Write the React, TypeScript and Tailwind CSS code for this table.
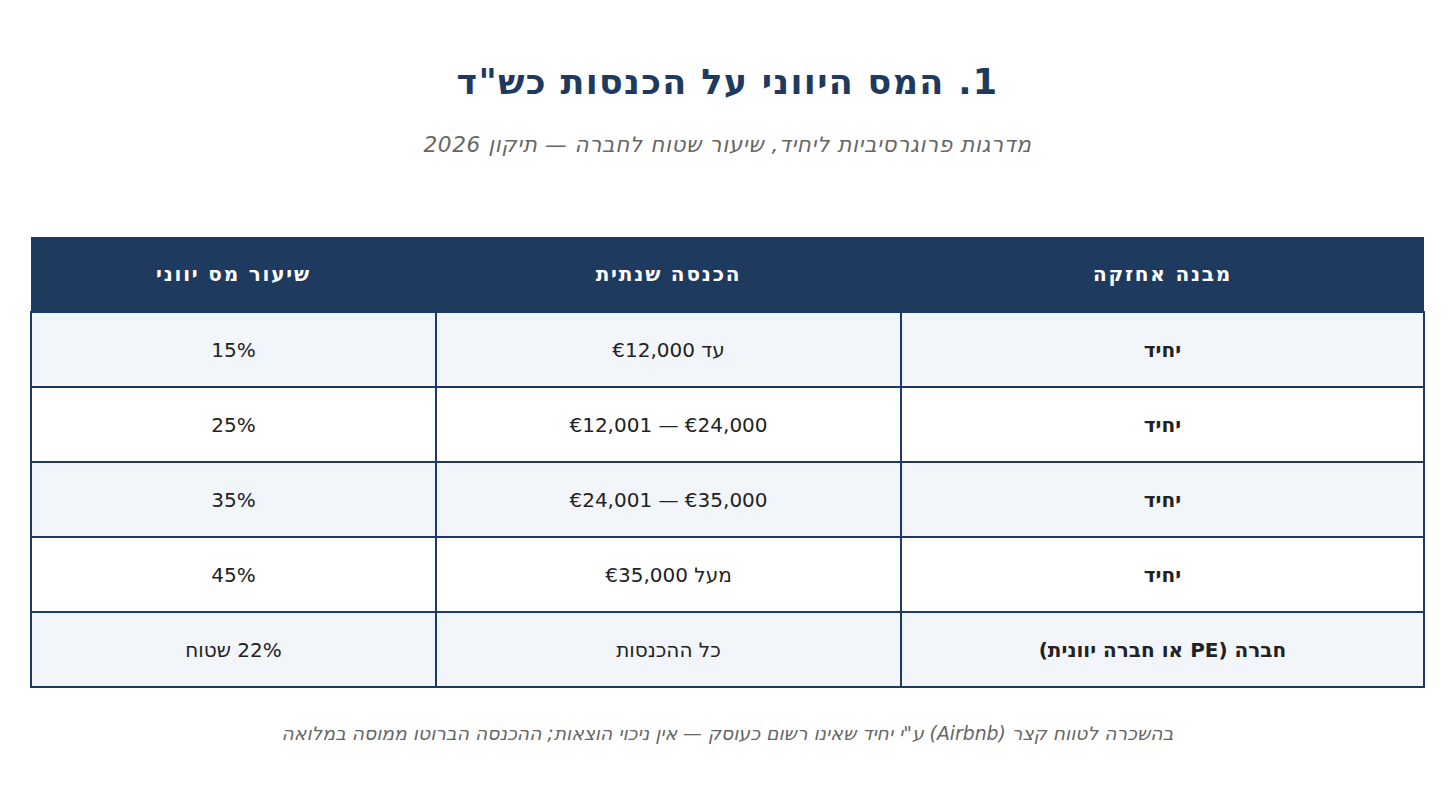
import React from 'react';

const rows = [
  { holding: 'יחיד', income: 'עד €12,000', rate: '15%' },
  { holding: 'יחיד', income: '€12,001 — €24,000', rate: '25%', ltr: true },
  { holding: 'יחיד', income: '€24,001 — €35,000', rate: '35%', ltr: true },
  { holding: 'יחיד', income: 'מעל €35,000', rate: '45%' },
  { holding: 'חברה (PE או חברה יוונית)', income: 'כל ההכנסות', rate: '22% שטוח' }
];

const App = () => {
  return (
    <div dir="rtl" className="min-h-screen bg-white font-['DejaVu_Sans',sans-serif] px-[30px]">
      <h1 className="pt-[58px] text-center text-[35px] font-bold leading-[48px] tracking-[1.3px] text-[#1f3a5f]">
        1. המס היווני על הכנסות כש"ד
      </h1>
      <p className="mt-[25px] text-center text-[21.6px] italic leading-[28px] tracking-[0.6px] text-[#666666]">
        מדרגות פרוגרסיביות ליחיד, שיעור שטוח לחברה — תיקון 2026
      </p>

      <table className="mt-[78px] w-full border-collapse text-[20px]">
        <thead>
          <tr className="h-[75px] bg-[#1f3a5f] text-white">
            <th className="w-[523px] font-bold tracking-[1.8px]">מבנה אחזקה</th>
            <th className="w-[465px] font-bold tracking-[1.8px]">הכנסה שנתית</th>
            <th className="font-bold tracking-[1.8px]">שיעור מס יווני</th>
          </tr>
        </thead>
        <tbody>
          {rows.map((r, idx) => (
            <tr
              key={idx}
              className={`h-[75px] text-[#222222] ${idx % 2 === 0 ? 'bg-[#f2f5fa]' : 'bg-white'}`}
            >
              <td className="border-2 border-[#1f3a5f] text-center font-bold">{r.holding}</td>
              <td className="border-2 border-[#1f3a5f] text-center">
                {r.ltr ? <span dir="ltr">{r.income}</span> : r.income}
              </td>
              <td className="border-2 border-[#1f3a5f] text-center">{r.rate}</td>
            </tr>
          ))}
        </tbody>
      </table>

      <p className="mt-[34px] text-center text-[18.8px] italic leading-[24px] text-[#666666]">
        בהשכרה לטווח קצר (Airbnb) ע"י יחיד שאינו רשום כעוסק — אין ניכוי הוצאות; ההכנסה הברוטו ממוסה במלואה
      </p>
    </div>
  );
};

export default App;
